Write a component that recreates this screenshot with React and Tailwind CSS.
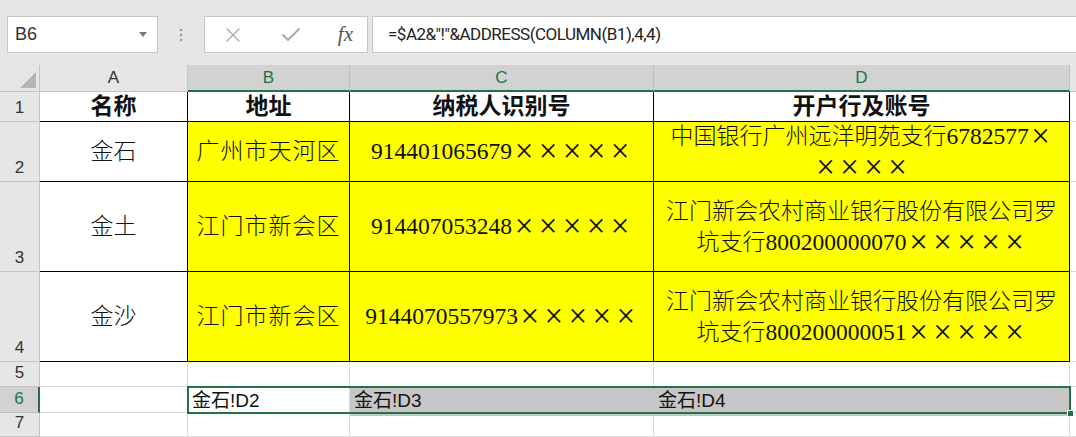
import React from "react";
import { X, Check } from "lucide-react";

const serif = "font-['Liberation_Serif','Noto_Sans_CJK_SC',serif]";
const sans = "font-['Liberation_Sans','Noto_Sans_CJK_SC',sans-serif]";

const rows = [
  { n: "2", name: "金石", addr: "广州市天河区", tax: "914401065679×××××", bank: ["中国银行广州远洋明苑支行6782577×", "××××"] },
  { n: "3", name: "金土", addr: "江门市新会区", tax: "914407053248×××××", bank: ["江门新会农村商业银行股份有限公司罗", "坑支行800200000070×××××"] },
  { n: "4", name: "金沙", addr: "江门市新会区", tax: "9144070557973×××××", bank: ["江门新会农村商业银行股份有限公司罗", "坑支行800200000051×××××"] },
];

// SimSun draws × full width and digits as serif; split the runs so each gets its look
function Wide({ text }) {
  return text.split(/(\d+|×)/).filter(Boolean).map((part, i) => {
    if (part === "×")
      return (
        <span key={i} className="inline-flex w-[24px] justify-center align-top text-[33px] leading-[31px] font-light">×</span>
      );
    if (/^\d+$/.test(part))
      return (
        <span key={i} className="font-normal font-['Liberation_Serif',serif] text-[23.5px]">{part}</span>
      );
    return <span key={i}>{part}</span>;
  });
}

function RowHead({ children, active }) {
  return (
    <div
      className={
        active
          ? `flex items-end justify-center pb-[1px] bg-[#d2d2d2] border-b border-[#bdbdbd] border-r-2 border-r-[#217346] text-[17px] text-[#217346] ${sans}`
          : `flex items-end justify-center pb-[1px] bg-[#e6e6e6] border-b border-r border-[#c3c3c3] text-[17px] text-[#333] ${sans}`
      }
    >
      {children}
    </div>
  );
}

function FormulaBar() {
  return (
    <div className="h-[65px] bg-[#e6e6e6] flex items-start pt-[16px] pl-[7px] gap-0">
      <div className={`w-[151px] h-[37px] bg-white border border-[#c6c6c6] flex items-center justify-between pl-[7px] pr-[10px] text-[18px] text-[#333] ${sans}`}>
        <span>B6</span>
        <svg width="8" height="5" viewBox="0 0 8 5">
          <path d="M0 0 L8 0 L4 5 Z" fill="#777" />
        </svg>
      </div>
      <div className="w-[46px] h-[37px] flex items-center justify-center">
        <svg width="4" height="14" viewBox="0 0 4 14">
          <circle cx="2" cy="2" r="1.3" fill="#9a9a9a" />
          <circle cx="2" cy="7" r="1.3" fill="#9a9a9a" />
          <circle cx="2" cy="12" r="1.3" fill="#9a9a9a" />
        </svg>
      </div>
      <div className="w-[164px] h-[37px] bg-white border border-[#c6c6c6] flex items-center pl-[16px] pr-[14px] justify-between">
        <X size={24} strokeWidth={1.3} color="#a8a8a8" />
        <Check size={24} strokeWidth={1.8} color="#a8a8a8" />
        <span className="font-['Liberation_Serif',serif] italic text-[21px] text-[#555]">fx</span>
      </div>
      <div className="ml-[4px] flex-1 h-[37px] bg-white border border-r-0 border-[#c6c6c6] flex items-center pl-[15px] text-[17px] text-[#222] font-['Roboto','Liberation_Sans',sans-serif] tracking-[-0.5px]">
        =$A2&amp;"!"&amp;ADDRESS(COLUMN(B1),4,4)
      </div>
    </div>
  );
}

export default function App() {
  const colHead = `flex items-center justify-center text-[17px] ${sans}`;
  const tCell = `flex flex-col items-center justify-center border-r border-b border-black text-[23px] leading-[31px] text-[#111] whitespace-nowrap ${serif}`;
  const grid = "border-r border-b border-[#d9d9d9]";

  return (
    <div className="w-[1076px] h-[437px] overflow-hidden bg-white">
      <FormulaBar />
      <div className="grid grid-cols-[40px_148px_162px_304px_416px_1fr] grid-rows-[27px_30px_60px_90px_90px_25px_26px_24px]">
        {/* column headers */}
        <div className="relative bg-[#e6e6e6] border-r border-b border-[#c3c3c3]">
          <svg className="absolute right-[3px] bottom-[3px]" width="16" height="16" viewBox="0 0 16 16">
            <path d="M16 0 L16 16 L0 16 Z" fill="#b5b5b5" />
          </svg>
        </div>
        <div className={`${colHead} bg-[#e6e6e6] border-r border-b border-[#c3c3c3] text-[#333]`}>A</div>
        <div className={`${colHead} bg-[#d2d2d2] border-r border-[#bdbdbd] border-b-2 border-b-[#217346] text-[#217346]`}>B</div>
        <div className={`${colHead} bg-[#d2d2d2] border-r border-[#bdbdbd] border-b-2 border-b-[#217346] text-[#217346]`}>C</div>
        <div className={`${colHead} bg-[#d2d2d2] border-r border-[#bdbdbd] border-b-2 border-b-[#217346] text-[#217346]`}>D</div>
        <div className="bg-[#e6e6e6] border-b border-[#c3c3c3]" />

        {/* row 1 */}
        <RowHead>1</RowHead>
        <div className={`${tCell} font-bold`}>名称</div>
        <div className={`${tCell} font-bold`}>地址</div>
        <div className={`${tCell} font-bold`}>纳税人识别号</div>
        <div className={`${tCell} font-bold`}>开户行及账号</div>
        <div className="border-b border-[#d9d9d9]" />

        {rows.map((r) => (
          <React.Fragment key={r.n}>
            <RowHead>{r.n}</RowHead>
            <div className={`${tCell} font-light`}>{r.name}</div>
            <div className={`${tCell} font-light bg-[#ffff00] tracking-[1px]`}>{r.addr}</div>
            <div className={`${tCell} font-light bg-[#ffff00]`}>
              <div><Wide text={r.tax} /></div>
            </div>
            <div className={`${tCell} font-light bg-[#ffff00]`}>
              {r.bank.map((line, i) => (
                <div key={i}><Wide text={line} /></div>
              ))}
            </div>
            <div className="border-b border-[#d9d9d9]" />
          </React.Fragment>
        ))}

        {/* row 5 */}
        <RowHead>5</RowHead>
        <div className={grid} />
        <div className={grid} />
        <div className={grid} />
        <div className={grid} />
        <div className="border-b border-[#d9d9d9]" />

        {/* row 6, B6:D6 selected */}
        <RowHead active>6</RowHead>
        <div className={grid} />
        <div className={`col-span-3 relative grid grid-cols-[162px_304px_416px] text-[19px] text-[#111] ${sans}`}>
          <div className="flex items-center pl-[4px] bg-white border-r border-[#d9d9d9]">金石!D2</div>
          <div className="flex items-center pl-[4px] bg-[#c6c6c6]">金石!D3</div>
          <div className="flex items-center pl-[4px] bg-[#c6c6c6]">金石!D4</div>
          <div className="absolute -left-[1px] -top-[1px] -right-[1px] bottom-[-1px] border-2 border-[#217346] pointer-events-none" />
          <div className="absolute -right-[4px] -bottom-[4px] w-[7px] h-[7px] bg-[#217346] border border-white" />
        </div>
        <div className="border-b border-[#d9d9d9]" />

        {/* row 7 */}
        <RowHead>7</RowHead>
        <div className={grid} />
        <div className={grid} />
        <div className={grid} />
        <div className={grid} />
        <div className="border-b border-[#d9d9d9]" />
      </div>
    </div>
  );
}
